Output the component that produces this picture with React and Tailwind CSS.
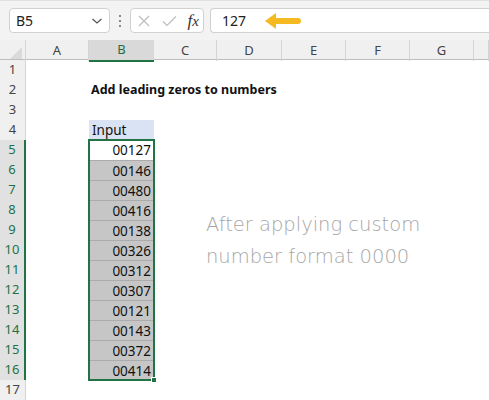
import React from "react";

const columns = ["A", "B", "C", "D", "E", "F", "G", ""];
const values = ["00127", "00146", "00480", "00416", "00138", "00326", "00312", "00307", "00121", "00143", "00372", "00414"];

const gridCols = "grid grid-cols-[26px_63px_65px_63px_65px_64px_64px_64px_1fr]";

const Toolbar = () => (
  <div className="flex h-[40px] items-center bg-[#f3f3f3] pl-[9px] border-t border-[#e0e0e0]">
    <div className="flex h-[25px] w-[101px] items-center justify-between rounded-[4px] border border-[#d1d1d1] bg-white pl-[6px] pr-[6px] text-[14px] text-[#222]">
      <span>B5</span>
      <svg width="12" height="8" viewBox="0 0 12 8" fill="none" stroke="#555" strokeWidth="1.3">
        <path d="M1.5 2l4.5 4 4.5-4" />
      </svg>
    </div>
    <div className="flex w-[20px] flex-col items-center justify-center gap-[3px]">
      <span className="h-[2px] w-[2px] bg-[#888]" />
      <span className="h-[2px] w-[2px] bg-[#888]" />
      <span className="h-[2px] w-[2px] bg-[#888]" />
    </div>
    <div className="flex h-[25px] w-[74px] items-center justify-between rounded-[4px] border border-[#d1d1d1] bg-white pl-[6px] pr-[4px]">
      <svg width="14" height="14" viewBox="0 0 14 14" stroke="#bdbdbd" strokeWidth="1.2">
        <path d="M2 2l10 10M12 2L2 12" />
      </svg>
      <svg width="15" height="12" viewBox="0 0 15 12" fill="none" stroke="#bdbdbd" strokeWidth="1.2">
        <path d="M1 6.5l4 4L14 1.5" />
      </svg>
      <span className="text-[17px] italic text-[#333] [font-family:'Liberation_Serif',serif] leading-none">
        f<span className="text-[15px]">x</span>
      </span>
    </div>
    <div className="ml-[6px] flex h-[25px] flex-1 items-center gap-[18px] rounded-l-[4px] border border-r-0 border-[#d1d1d1] bg-white pl-[11px] text-[14px] text-[#222]">
      <span>127</span>
      <svg width="38" height="18" viewBox="0 0 38 18">
        <path d="M1 9l11-8v5h22a3 3 0 010 6H12v5z" fill="#f5b921" />
      </svg>
    </div>
  </div>
);

const HeaderRow = () => (
  <div className={`${gridCols} h-[20px] bg-[#f0f0f0] border-b border-[#bdbdbd] text-[13px] text-[#444]`}>
    <div className="relative border-r border-[#d4d4d4]">
      <svg className="absolute bottom-[2px] right-[3px]" width="12" height="12" viewBox="0 0 12 12">
        <path d="M12 0v12H0z" fill="#dadada" />
      </svg>
    </div>
    {columns.map((c, i) => (
      <div
        key={i}
        className={
          c === "B"
            ? "flex items-center justify-center bg-[#d9d9d9] text-[#1e7145] border-b-2 border-[#217346] -mb-px"
            : "flex items-center justify-center border-r border-[#d4d4d4]"
        }
      >
        {c}
      </div>
    ))}
  </div>
);

const SheetRow = ({ n }) => {
  const selected = n >= 5 && n <= 16;
  let bCell = null;
  if (n === 4) {
    bCell = <div className="flex items-center bg-[#dae3f3] pl-[3px]">Input</div>;
  } else if (selected) {
    bCell = (
      <div
        className={
          n === 5
            ? "flex items-center justify-end bg-white pr-[3px]"
            : "flex items-center justify-end bg-[#c6c6c6] border-t border-[#ababab] pr-[3px]"
        }
      >
        {values[n - 5]}
      </div>
    );
  } else {
    bCell = <div />;
  }
  return (
    <div className={`${gridCols} h-[20px] text-[13.5px] text-[#111]`}>
      <div
        className={
          selected
            ? "flex items-center justify-center bg-[#e1e1e1] text-[13px] text-[#1e7145] border-b border-[#c8c8c8] border-r-2 border-r-[#217346]"
            : "flex items-center justify-center bg-[#f0f0f0] text-[13px] text-[#444] border-b border-[#d4d4d4] border-r border-r-[#d4d4d4]"
        }
      >
        {n}
      </div>
      <div />
      {bCell}
      {n === 2 ? (
        <div className="col-span-4 flex items-center -ml-[65px] pl-[2px] whitespace-nowrap font-bold text-[12.5px]">
          Add leading zeros to numbers
        </div>
      ) : null}
    </div>
  );
};

const App = () => {
  const rows = Array.from({ length: 17 }, (_, i) => i + 1);
  return (
    <div className="h-[400px] w-[489px] overflow-hidden bg-white [font-family:'Noto_Sans',sans-serif]">
      <Toolbar />
      <HeaderRow />
      <div className="relative">
        {rows.map((n) => (
          <SheetRow key={n} n={n} />
        ))}
        <div className="pointer-events-none absolute left-[88px] top-[79px] h-[242px] w-[67px] border-2 border-[#217346]" />
        <div className="absolute left-[151px] top-[317px] h-[6px] w-[6px] border border-white bg-[#217346]" />
        <div className="absolute left-[206px] top-[149px] text-[19.5px] leading-[32px] text-[#a6a6a6] [font-family:'DejaVu_Sans',sans-serif] font-light">
          <div>After applying custom</div>
          <div>number format 0000</div>
        </div>
      </div>
    </div>
  );
};

export default App;
